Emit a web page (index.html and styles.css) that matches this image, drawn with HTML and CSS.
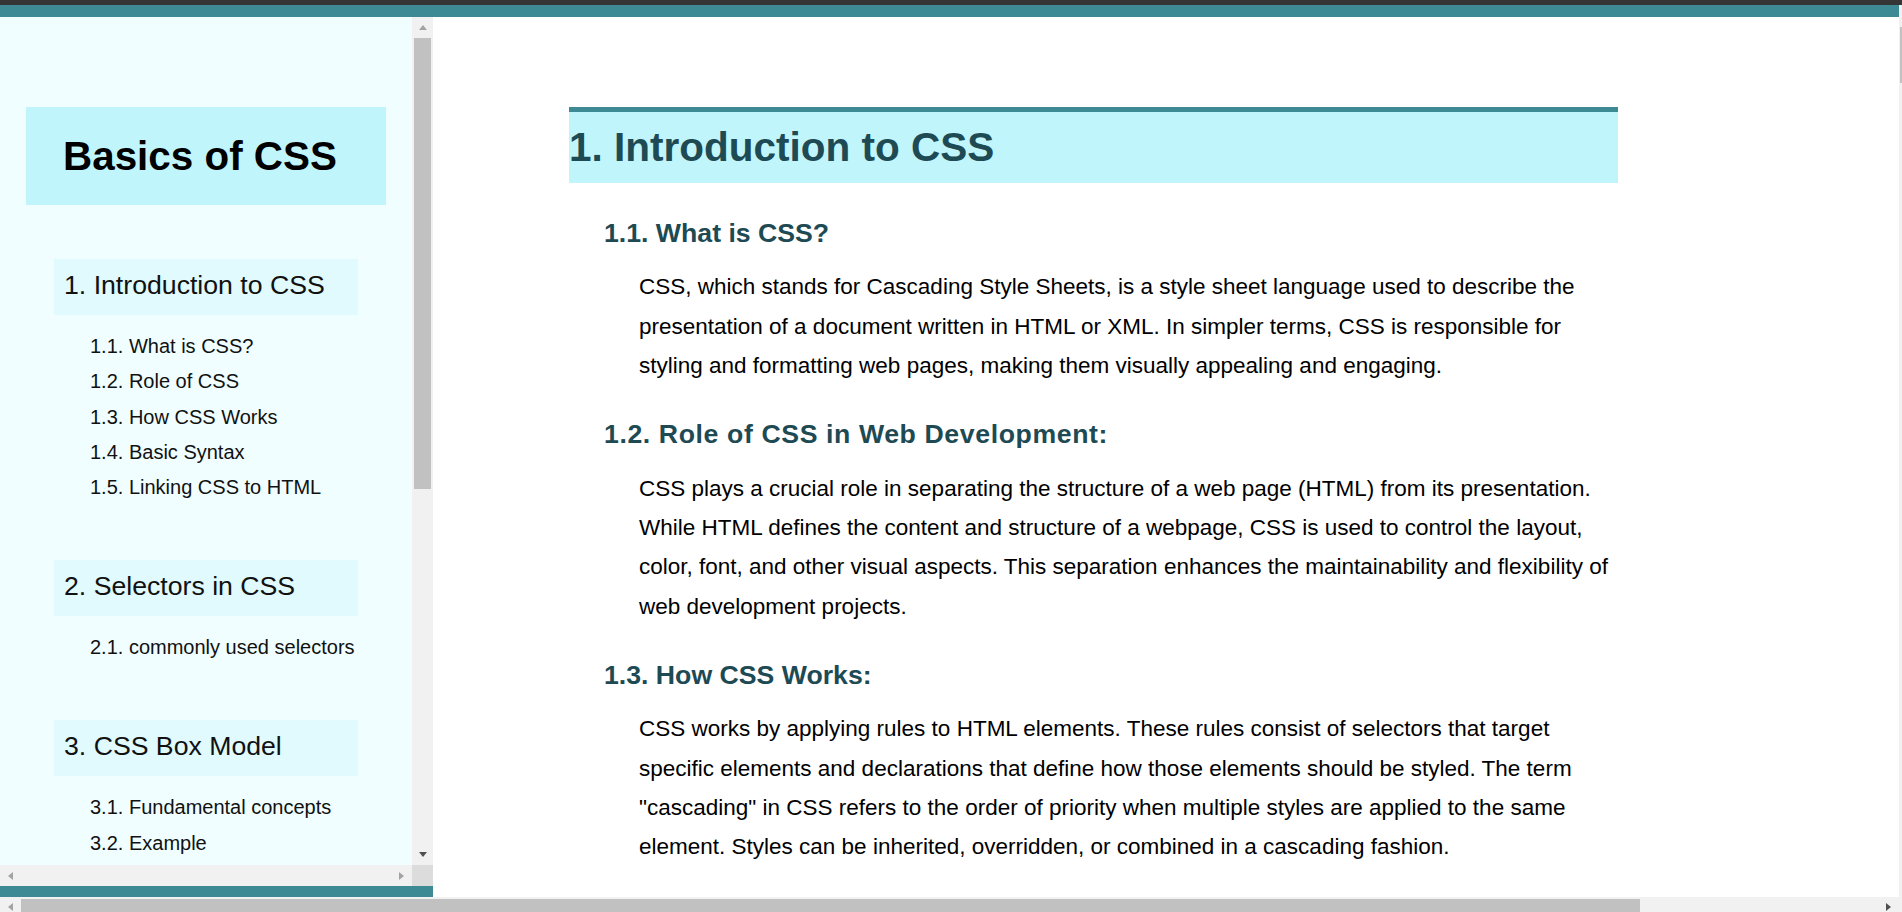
FILE: index.html
```html
<!DOCTYPE html>
<html lang="en">
<head>
<meta charset="utf-8">
<title>Basics of CSS</title>
<link rel="stylesheet" href="styles.css">
</head>
<body>
<div class="app">
  <div class="os-bar"></div>
  <div class="window">
    <div class="viewport">
      <div class="header"></div>
      <div class="layout">
        <aside class="sidebar">
          <div class="sb-body">
            <nav class="sb-content">
              <div class="sb-title">Basics of CSS</div>
              <section class="toc-sec">
                <div class="toc-head">1. Introduction to CSS</div>
                <ul class="toc-list">
                  <li>1.1. What is CSS?</li>
                  <li>1.2. Role of CSS</li>
                  <li>1.3. How CSS Works</li>
                  <li>1.4. Basic Syntax</li>
                  <li>1.5. Linking CSS to HTML</li>
                </ul>
              </section>
              <section class="toc-sec">
                <div class="toc-head">2. Selectors in CSS</div>
                <ul class="toc-list">
                  <li>2.1. commonly used selectors</li>
                </ul>
              </section>
              <section class="toc-sec">
                <div class="toc-head">3. CSS Box Model</div>
                <ul class="toc-list">
                  <li>3.1. Fundamental concepts</li>
                  <li>3.2. Example</li>
                </ul>
              </section>
            </nav>
            <div class="vbar">
              <div class="btn-v"><span class="arr arr-up dim"></span></div>
              <div class="vthumb"></div>
              <div class="vspace"></div>
              <div class="btn-v"><span class="arr arr-down"></span></div>
            </div>
          </div>
          <div class="sb-hbar">
            <div class="htrack">
              <div class="btn-h"><span class="arr arr-left dim"></span></div>
              <div class="btn-h"><span class="arr arr-right dim"></span></div>
            </div>
            <div class="corner"></div>
          </div>
          <div class="sb-foot"></div>
        </aside>
        <main class="main">
          <article class="content">
            <h1 class="ch-title">1. Introduction to CSS</h1>
            <h2 class="sub-title">1.1. What is CSS?</h2>
            <p class="para">CSS, which stands for Cascading Style Sheets, is a style sheet language used to describe the presentation of a document written in HTML or XML. In simpler terms, CSS is responsible for styling and formatting web pages, making them visually appealing and engaging.</p>
            <h2 class="sub-title sub-title--wide">1.2. Role of CSS in Web Development:</h2>
            <p class="para">CSS plays a crucial role in separating the structure of a web page (HTML) from its presentation. While HTML defines the content and structure of a webpage, CSS is used to control the layout, color, font, and other visual aspects. This separation enhances the maintainability and flexibility of web development projects.</p>
            <h2 class="sub-title">1.3. How CSS Works:</h2>
            <p class="para">CSS works by applying rules to HTML elements. These rules consist of selectors that target specific elements and declarations that define how those elements should be styled. The term "cascading" in CSS refers to the order of priority when multiple styles are applied to the same element. Styles can be inherited, overridden, or combined in a cascading fashion.</p>
          </article>
        </main>
      </div>
      <div class="page-hbar">
        <div class="btn-ph"><span class="arr arr-left dim"></span></div>
        <div class="ph-thumb"></div>
        <div class="ph-space"></div>
        <div class="btn-ph"><span class="arr arr-right"></span></div>
      </div>
    </div>
    <div class="page-vbar"><div class="pv-thumb"></div></div>
  </div>
</div>
</body>
</html>
```

FILE: styles.css
```css
html, body {
  margin: 0;
  padding: 0;
  height: 100%;
  overflow: hidden;
  background: #ffffff;
  font-family: "Liberation Sans", Arial, sans-serif;
}

.app {
  display: flex;
  flex-direction: column;
  width: 1902px;
  height: 912px;
}

.os-bar {
  height: 5px;
  background: #353535;
  flex: none;
}

.window {
  flex: 1;
  display: flex;
  min-height: 0;
}

.viewport {
  width: 1899px;
  display: flex;
  flex-direction: column;
  min-height: 0;
}

.header {
  height: 12px;
  background: #3e8a94;
  flex: none;
}

.layout {
  flex: 1;
  display: flex;
  min-height: 0;
}

/* ---------- sidebar ---------- */
.sidebar {
  width: 433px;
  flex: none;
  display: flex;
  flex-direction: column;
  background: #f0feff;
}

.sb-body {
  flex: 1;
  display: flex;
  min-height: 0;
}

.sb-content {
  width: 412px;
  flex: none;
  overflow: hidden;
  padding-top: 90px;
  box-sizing: border-box;
}

.sb-title {
  margin: 0 0 54px 26px;
  width: 360px;
  box-sizing: border-box;
  padding: 26px 0 26px 37px;
  background: #c0f5fb;
  color: #000;
  font-size: 40.4px;
  font-weight: bold;
  line-height: 46px;
  white-space: nowrap;
}

.toc-sec {
  margin-bottom: 54.8px;
}

.toc-head {
  margin-left: 54px;
  width: 304px;
  box-sizing: border-box;
  padding: 11px 8px 14px 10px;
  background: #e0fafe;
  color: #111;
  font-size: 26.67px;
  line-height: 31px;
  white-space: nowrap;
}

.toc-list {
  list-style: none;
  margin: 0;
  padding: 14px 0 0 90px;
  color: #111;
  font-size: 20px;
  line-height: 35.3px;
  white-space: nowrap;
}

/* fake scrollbars */
.vbar {
  width: 21px;
  flex: none;
  display: flex;
  flex-direction: column;
  background: #f1f1f1;
}

.btn-v {
  height: 21px;
  flex: none;
  display: flex;
  align-items: center;
  justify-content: center;
}

.vthumb {
  height: 451px;
  margin: 0 2px;
  background: #c1c1c1;
  flex: none;
}

.vspace {
  flex: 1;
}

.sb-hbar {
  height: 21px;
  flex: none;
  display: flex;
}

.htrack {
  flex: 1;
  display: flex;
  justify-content: space-between;
  background: #f1f1f1;
}

.btn-h {
  width: 21px;
  display: flex;
  align-items: center;
  justify-content: center;
}

.corner {
  width: 21px;
  background: #dcdcdc;
}

.sb-foot {
  height: 11px;
  background: #3e8a94;
  flex: none;
}

.arr {
  display: block;
  width: 0;
  height: 0;
}

.arr-up {
  border-left: 4.5px solid transparent;
  border-right: 4.5px solid transparent;
  border-bottom: 5px solid #505050;
}

.arr-down {
  border-left: 4.5px solid transparent;
  border-right: 4.5px solid transparent;
  border-top: 5px solid #505050;
}

.arr-left {
  border-top: 4.5px solid transparent;
  border-bottom: 4.5px solid transparent;
  border-right: 5px solid #505050;
}

.arr-right {
  border-top: 4.5px solid transparent;
  border-bottom: 4.5px solid transparent;
  border-left: 5px solid #505050;
}

.arr-up.dim { border-bottom-color: #a3a3a3; }
.arr-down.dim { border-top-color: #a3a3a3; }
.arr-left.dim { border-right-color: #a3a3a3; }
.arr-right.dim { border-left-color: #a3a3a3; }

/* ---------- main ---------- */
.main {
  flex: 1;
  overflow: hidden;
  background: #ffffff;
}

.content {
  width: 1049px;
  padding: 90px 0 0 136px;
}

.ch-title {
  margin: 0 0 35px;
  border-top: 5px solid #3e8a94;
  background: #c0f5fb;
  padding: 12px 0 13px;
  color: #1e4a54;
  font-size: 40.5px;
  font-weight: bold;
  line-height: 46px;
}

.sub-title {
  margin: 34px 0 18.4px 35px;
  color: #1e4a54;
  font-size: 26.67px;
  font-weight: bold;
  line-height: 31px;
}

.ch-title + .sub-title {
  margin-top: 35px;
}

.sub-title--wide {
  letter-spacing: 0.6px;
}

.para {
  margin: 0 0 0 70px;
  color: #000;
  font-size: 22.5px;
  line-height: 39.3px;
}

/* page scrollbars */
.page-hbar {
  height: 15px;
  flex: none;
  display: flex;
  background: #f1f1f1;
}

.btn-ph {
  width: 21px;
  flex: none;
  display: flex;
  align-items: flex-end;
  justify-content: center;
  padding-bottom: 1px;
  box-sizing: border-box;
}

.ph-thumb {
  width: 1619px;
  margin-top: 2px;
  background: #c1c1c1;
  flex: none;
}

.ph-space {
  flex: 1;
}

.page-vbar {
  width: 3px;
  flex: none;
  background: #f1f1f1;
  padding-top: 22px;
  box-sizing: border-box;
}

.pv-thumb {
  height: 56px;
  margin-left: 1px;
  background: #c1c1c1;
}
```
